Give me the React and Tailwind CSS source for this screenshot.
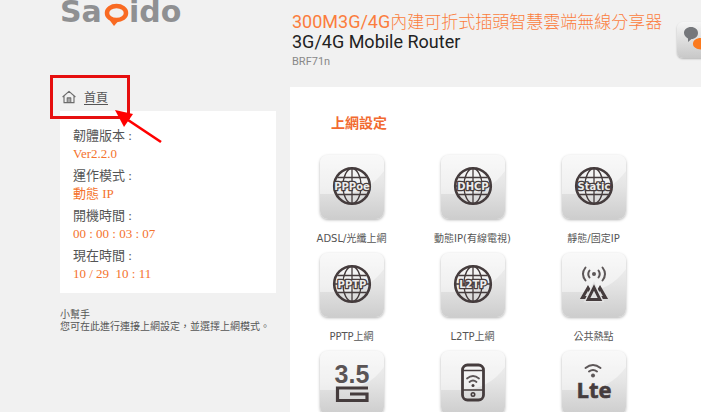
const INK = '#453c3d';

function Globe({ text }) {
  return (
    <g fill="none" stroke={INK} strokeWidth="1.3">
      <circle cx="32" cy="31" r="17.8" strokeWidth="2.6" />
      <ellipse cx="32" cy="31" rx="9" ry="17.5" />
      <path d="M32 13v36M15 31h34M17.5 22.5h29M17.5 39.5h29" />
      <text
        x="32"
        y="35"
        textAnchor="middle"
        fontSize="10"
        fontWeight="700"
        fill="#ececec"
        strokeWidth="2.6"
        strokeLinejoin="round"
        paintOrder="stroke"
        className="font-['DejaVu_Sans',sans-serif]"
      >
        {text}
      </text>
    </g>
  );
}

function Hotspot() {
  return (
    <g fill="none" stroke={INK}>
      <circle cx="32" cy="21" r="2" fill="#5d5758" stroke="none" />
      <g stroke="#5d5758" strokeWidth="2" strokeLinecap="round">
        <path d="M27.500 17.500q-2.500 3.500 0 7M36.500 17.500q2.500 3.500 0 7M23.500 14.500q-5 6.500 0 13M40.500 14.500q5 6.500 0 13" />
      </g>
      <path d="M27 44.500h-6.500l5.500-9.500 3 5M37 44.500h6.500l-5.500-9.500-3 5" strokeWidth="3" />
      <path d="M32 34.500l6 12H26z" stroke="#e4e4e4" strokeWidth="5.500" />
      <path d="M32 34.500l6 12H26z" strokeWidth="2.800" />
    </g>
  );
}

function ThreeFiveG() {
  return (
    <g>
      <text x="32" y="32" textAnchor="middle" fontSize="25" fontWeight="700" fill="#5a5455" className="font-['Liberation_Sans',sans-serif]">
        3.5
      </text>
      <path d="M48 37H17.500v12.500h29.500v-6.500H30" fill="none" stroke={INK} strokeWidth="3.2" />
    </g>
  );
}

function Phone() {
  return (
    <g fill="none" stroke={INK} strokeWidth="2.8">
      <rect x="21.500" y="14" width="21" height="35" rx="5" />
      <path d="M22 19.500h20M22 39h20" strokeWidth="1.400" />
      <circle cx="32" cy="43.500" r="1.700" strokeWidth="1.600" />
      <circle cx="32" cy="34.500" r="1.500" fill={INK} stroke="none" />
      <path d="M28.500 31q3.500-3 7 0M26 27.500q6-5 12 0" stroke="#5d5758" strokeWidth="1.800" strokeLinecap="round" />
    </g>
  );
}

function Lte() {
  return (
    <g>
      <text
        x="32"
        y="47"
        textAnchor="middle"
        fontSize="22"
        fontWeight="700"
        fill={INK}
        stroke={INK}
        strokeWidth="0.6"
        className="font-['Open_Sans',sans-serif]"
      >
        Lte
      </text>
      <circle cx="31" cy="24.500" r="2" fill="#5d5758" />
      <path d="M27 20.500q4-3 8 0M23.500 17q7.500-6 15 0" fill="none" stroke="#5d5758" strokeWidth="2" strokeLinecap="round" />
    </g>
  );
}

const MODES = [
  { label: 'ADSL/光纖上網', icon: <Globe text="PPPoe" /> },
  { label: '動態IP(有線電視)', icon: <Globe text="DHCP" /> },
  { label: '靜態/固定IP', icon: <Globe text="Static" /> },
  { label: 'PPTP上網', icon: <Globe text="PPTP" /> },
  { label: 'L2TP上網', icon: <Globe text="L2TP" /> },
  { label: '公共熱點', icon: <Hotspot /> },
  { name: '3.5G', icon: <ThreeFiveG /> },
  { name: 'Wi-Fi', icon: <Phone /> },
  { name: 'LTE', icon: <Lte /> },
];

const STATUS = [
  ['韌體版本 :', 'Ver2.2.0'],
  ['運作模式 :', '動態 IP'],
  ['開機時間 :', '00 : 00 : 03 : 07'],
  ['現在時間 :', '10 / 29\u00a0 10 : 11'],
];

function ModeTile({ label, name, icon }) {
  return (
    <a href="#" aria-label={name} className="flex flex-col items-center">
      <span className="size-16 overflow-hidden rounded-lg bg-linear-to-b from-[#f4f4f4] via-[#e4e4e4] to-[#cdcdcd] shadow-[0_1px_3px_rgba(0,0,0,0.3)]">
        <svg viewBox="0 0 64 64" className="size-16" aria-hidden="true">
          <path d="M0 0h64v16Q48 38 22 39H0z" fill="#fff" opacity="0.45" />
          {icon}
        </svg>
      </span>
      {label && (
        <span className="mt-3 text-[10px] leading-4 whitespace-nowrap text-[#555] font-['DejaVu_Sans','Noto_Sans_CJK_TC',sans-serif]">
          {label}
        </span>
      )}
    </a>
  );
}

function Logo() {
  return (
    <svg viewBox="0 0 124 28" className="h-7 w-[124px]" role="img" aria-label="Sapido">
      <g fontSize="30" fontWeight="700" fill="#8f9092" className="font-['DejaVu_Sans',sans-serif]">
        <text x="0" y="22">Sa</text>
        <text x="69" y="22">ido</text>
      </g>
      <ellipse cx="56.500" cy="13" rx="9.500" ry="7" fill="none" stroke="#f96a22" strokeWidth="4.500" />
      <path d="M48 18h13l-7 8z" fill="#f96a22" />
    </svg>
  );
}

function HomeCallout() {
  return (
    <svg viewBox="0 0 114 70" className="pointer-events-none absolute -top-[10px] -left-[10px] h-[70px] w-[114px]" aria-hidden="true">
      <rect x="1.500" y="1.500" width="77" height="41" fill="none" stroke="#e60f0f" strokeWidth="3" />
      <path d="M111 67L78 45" stroke="#f00" strokeWidth="2.600" />
      <path d="M65 35l18 4-9 13z" fill="#f00" />
    </svg>
  );
}

export default function App() {
  return (
    <div className="flex h-screen overflow-hidden bg-[#f1f1f1] pl-[60px] font-['Liberation_Sans','Noto_Sans_CJK_TC',sans-serif]">
      <aside className="w-[216px] shrink-0">
        <Logo />
        <nav className="relative mt-[57px] mb-[2px] flex h-6 items-center">
          <a href="#" className="flex items-center gap-2 text-[12px] leading-5 text-[#555] font-['Noto_Sans_CJK_TC',sans-serif]">
            <svg viewBox="0 0 16 16" className="ml-[2px] size-[14px]" fill="none" stroke="#6d6d6d" strokeWidth="1.300" aria-hidden="true">
              <path d="M.7 8L8 1.500 15.300 8M2.300 6.800v7.700h11.400V6.800M6 14.500V9h4v5.500M8 9v5" strokeLinejoin="round" />
            </svg>
            <span className="underline underline-offset-2">首頁</span>
          </a>
          <HomeCallout />
        </nav>
        <dl className="flex h-[182px] flex-col gap-1 bg-white px-[13px] pt-[15px] text-[13px] font-['Liberation_Serif','Noto_Sans_CJK_TC',serif]">
          {STATUS.map(([label, value]) => (
            <div key={label}>
              <dt className="leading-5 text-[#555]">{label}</dt>
              <dd className="leading-4 text-[#f4722c]">{value}</dd>
            </div>
          ))}
        </dl>
        <section className="mt-4 text-[10px] leading-3 whitespace-nowrap text-[#555]">
          <h2>小幫手</h2>
          <p>{'您可在此進行連接上網設定\uff0c並選擇上網模式\u3002'}</p>
        </section>
      </aside>

      <div className="ml-[14px] flex min-w-0 flex-1 flex-col">
        <header className="flex h-[87px] shrink-0 justify-between">
          <div className="pt-3 pl-[2px] whitespace-nowrap font-['Roboto','Noto_Sans_CJK_TC',sans-serif]">
            <p className="text-[17px] leading-5 text-[#fb7d3d]">
              <span className="text-lg leading-5">300M3G/4G</span>
              <span className="font-light">內建可折式插頭智慧雲端無線分享器</span>
            </p>
            <h1 className="text-lg leading-5 text-[#222]">3G/4G Mobile Router</h1>
            <p className="mt-[2px] text-[11px] leading-4 text-[#888]">BRF71n</p>
          </div>
          <button
            type="button"
            aria-label="訊息"
            className="mt-[22px] -mr-3 size-9 shrink-0 overflow-hidden rounded-md bg-linear-to-b from-[#f5f5f5] to-[#c8c8c8] shadow-[0_1px_2px_rgba(0,0,0,0.25)]"
          >
            <svg viewBox="0 0 36 36" className="size-9" aria-hidden="true">
              <path d="M14 5c4 0 7 2.500 7 6s-3 6-6.500 6L11 20v-3.500C9 15.500 7 13.500 7 11c0-3.500 3-6 7-6z" fill="#75777b" />
              <path d="M24 16c5 0 8 2.500 8 6 0 2-1 4-3 5v3l-4-2.500c-5 0-9-2-9-5.500s3-6 8-6z" fill="#fb7a1e" />
            </svg>
          </button>
        </header>
        <main className="flex-1 bg-white pt-[26px]">
          <h2 className="pl-[41px] text-sm leading-5 font-bold text-[#f26a30]">上網設定</h2>
          <div className="mt-[22px] ml-px grid grid-cols-[repeat(3,121px)] gap-y-[6px]">
            {MODES.map((mode) => (
              <ModeTile key={mode.label ?? mode.name} {...mode} />
            ))}
          </div>
        </main>
      </div>
    </div>
  );
}
